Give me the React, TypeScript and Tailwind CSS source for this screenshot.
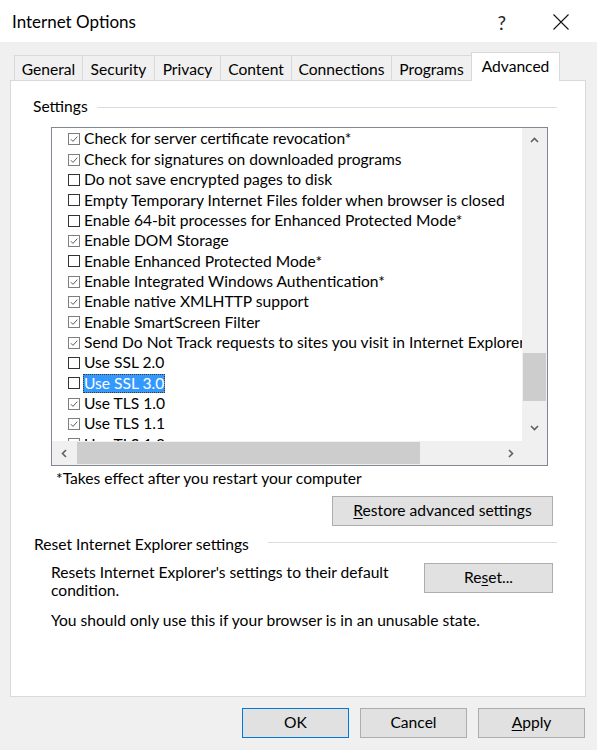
import React from 'react';

type Option = { label: string; checked: boolean; selected?: boolean };

const options: Option[] = [
  { label: 'Check for server certificate revocation*', checked: true },
  { label: 'Check for signatures on downloaded programs', checked: true },
  { label: 'Do not save encrypted pages to disk', checked: false },
  { label: 'Empty Temporary Internet Files folder when browser is closed', checked: false },
  { label: 'Enable 64-bit processes for Enhanced Protected Mode*', checked: false },
  { label: 'Enable DOM Storage', checked: true },
  { label: 'Enable Enhanced Protected Mode*', checked: false },
  { label: 'Enable Integrated Windows Authentication*', checked: true },
  { label: 'Enable native XMLHTTP support', checked: true },
  { label: 'Enable SmartScreen Filter', checked: true },
  { label: 'Send Do Not Track requests to sites you visit in Internet Explorer', checked: true },
  { label: 'Use SSL 2.0', checked: false },
  { label: 'Use SSL 3.0', checked: false, selected: true },
  { label: 'Use TLS 1.0', checked: true },
  { label: 'Use TLS 1.1', checked: true },
  { label: 'Use TLS 1.2', checked: true },
];

const tabs = [
  { name: 'General', w: 'w-[68px]' },
  { name: 'Security', w: 'w-[72px]' },
  { name: 'Privacy', w: 'w-[66px]' },
  { name: 'Content', w: 'w-[71px]' },
  { name: 'Connections', w: 'w-[100px]' },
  { name: 'Programs', w: 'w-[80px]' },
];

const CheckBox: React.FC<{ checked: boolean }> = ({ checked }) => (
  <span
    className={`w-[12px] h-[12px] shrink-0 border bg-white flex items-center justify-center ${
      checked ? 'border-[#7d7d7d]' : 'border-[#333333]'
    }`}
  >
    {checked && (
      <svg viewBox="0 0 10 10" className="w-[10px] h-[10px]">
        <path d="M1.8 5.2 L4 7.4 L8.3 2.6" fill="none" stroke="#5a5a5a" strokeWidth="1" />
      </svg>
    )}
  </span>
);

const Chevron: React.FC<{ dir: 'up' | 'down' | 'left' | 'right' }> = ({ dir }) => {
  const d = {
    up: 'M1 6 L4.5 2.5 L8 6',
    down: 'M1 3 L4.5 6.5 L8 3',
    left: 'M6 1 L2.5 4.5 L6 8',
    right: 'M3 1 L6.5 4.5 L3 8',
  }[dir];
  return (
    <svg viewBox="0 0 9 9" className="w-[9px] h-[9px]">
      <path d={d} fill="none" stroke="#606060" strokeWidth="1.6" />
    </svg>
  );
};

const WinButton: React.FC<{ className?: string; isDefault?: boolean; children: React.ReactNode }> = ({
  className = '',
  isDefault,
  children,
}) => (
  <button
    className={`h-[30px] flex items-center justify-center bg-[#e1e1e1] border text-[15.6px] text-black ${
      isDefault ? 'border-[#0078d7]' : 'border-[#adadad]'
    } ${className}`}
  >
    {children}
  </button>
);

export default function App() {
  return (
    <div className="w-[597px] h-[750px] bg-[#f0f0f0] font-[Lato,sans-serif] text-[15.6px] text-black overflow-hidden">
      {/* title bar */}
      <div className="h-[42px] bg-white flex items-center pl-[12px] pt-[2px]">
        <span className="text-[17px]">Internet Options</span>
        <span className="ml-auto mr-[47px] text-[19px] leading-none text-[#222]">?</span>
        <svg viewBox="0 0 16 16" className="w-[16px] h-[16px] mr-[28px]">
          <path d="M0.5 0.5 L15.5 15.5 M15.5 0.5 L0.5 15.5" stroke="#111" strokeWidth="1.1" />
        </svg>
      </div>

      {/* tab strip */}
      <div className="h-[38px] flex items-end pl-[14px] relative z-10">
        {tabs.map((t) => (
          <div
            key={t.name}
            className={`${t.w} h-[25px] border-t border-l border-[#d9d9d9] bg-[#f0f0f0] flex items-center justify-center pt-[3px]`}
          >
            {t.name}
          </div>
        ))}
        <div className="w-[89px] h-[29px] -mb-px border-t border-l border-r border-[#d9d9d9] bg-white flex items-center justify-center pb-[1px]">
          Advanced
        </div>
      </div>

      {/* tab page */}
      <div className="ml-[10px] w-[576px] h-[617px] border border-[#d9d9d9] bg-white flex flex-col">
        <div className="mt-[16px] h-[20px] flex items-center pl-[22px] pr-[28px]">
          <span className="w-[64px]">Settings</span>
          <div className="flex-1 h-px bg-[#dcdcdc]" />
        </div>

        {/* settings list */}
        <div className="ml-[40px] mt-[10px] w-[497px] h-[339px] border border-[#828790] flex flex-col">
          <div className="flex h-[313px]">
            <div className="w-[470px] bg-white overflow-hidden pt-px">
              {options.map((o) => (
                <div key={o.label} className="h-[20.35px] flex items-center pl-[16px] whitespace-nowrap">
                  <CheckBox checked={o.checked} />
                  {o.selected ? (
                    <span className="ml-[3px] h-[19px] flex items-center bg-[#3399ff] text-white border border-dotted border-[#4a3520]">
                      {o.label}
                    </span>
                  ) : (
                    <span className="ml-[4px]">{o.label}</span>
                  )}
                </div>
              ))}
            </div>
            <div className="w-[25px] bg-[#f0f0f0] flex flex-col items-center">
              <div className="h-[24px] flex items-center justify-center">
                <Chevron dir="up" />
              </div>
              <div className="mt-[201px] w-[23px] h-[48px] bg-[#cdcdcd]" />
              <div className="flex-1 flex items-end justify-center pb-[9px]">
                <Chevron dir="down" />
              </div>
            </div>
          </div>
          <div className="flex h-[24px] bg-[#f0f0f0]">
            <div className="w-[24px] flex items-center justify-center">
              <Chevron dir="left" />
            </div>
            <div className="ml-px mt-px w-[343px] h-[22px] bg-[#cdcdcd]" />
            <div className="ml-auto w-[24px] flex items-center justify-center">
              <Chevron dir="right" />
            </div>
            <div className="w-[25px]" />
          </div>
        </div>

        <div className="mt-[3px] h-[20px] flex items-center pl-[45px]">*Takes effect after you restart your computer</div>

        <div className="mt-[7px] flex justify-end pr-[32px]">
          <WinButton className="w-[221px]">
            <span>
              <span className="underline underline-offset-2">R</span>estore advanced settings
            </span>
          </WinButton>
        </div>

        <div className="mt-[9px] h-[20px] flex pl-[23px] pr-[28px]">
          <span className="w-[234px] self-center">Reset Internet Explorer settings</span>
          <div className="flex-1 h-px mt-[7px] bg-[#dcdcdc]" />
        </div>

        <div className="mt-[8px] flex pl-[40px] pr-[32px]">
          <p className="w-[355px] leading-[18px]">Resets Internet Explorer's settings to their default condition.</p>
          <WinButton className="ml-auto w-[129px]">
            <span>
              Re<span className="underline underline-offset-2">s</span>et...
            </span>
          </WinButton>
        </div>

        <p className="mt-[12px] pl-[40px] leading-[18px]">You should only use this if your browser is in an unusable state.</p>
      </div>

      {/* dialog buttons */}
      <div className="mt-[11px] flex justify-end gap-[11px] pr-[12px]">
        <WinButton isDefault className="w-[107px]">OK</WinButton>
        <WinButton className="w-[107px]">Cancel</WinButton>
        <WinButton className="w-[107px]">
          <span>
            <span className="underline underline-offset-2">A</span>pply
          </span>
        </WinButton>
      </div>
    </div>
  );
}
